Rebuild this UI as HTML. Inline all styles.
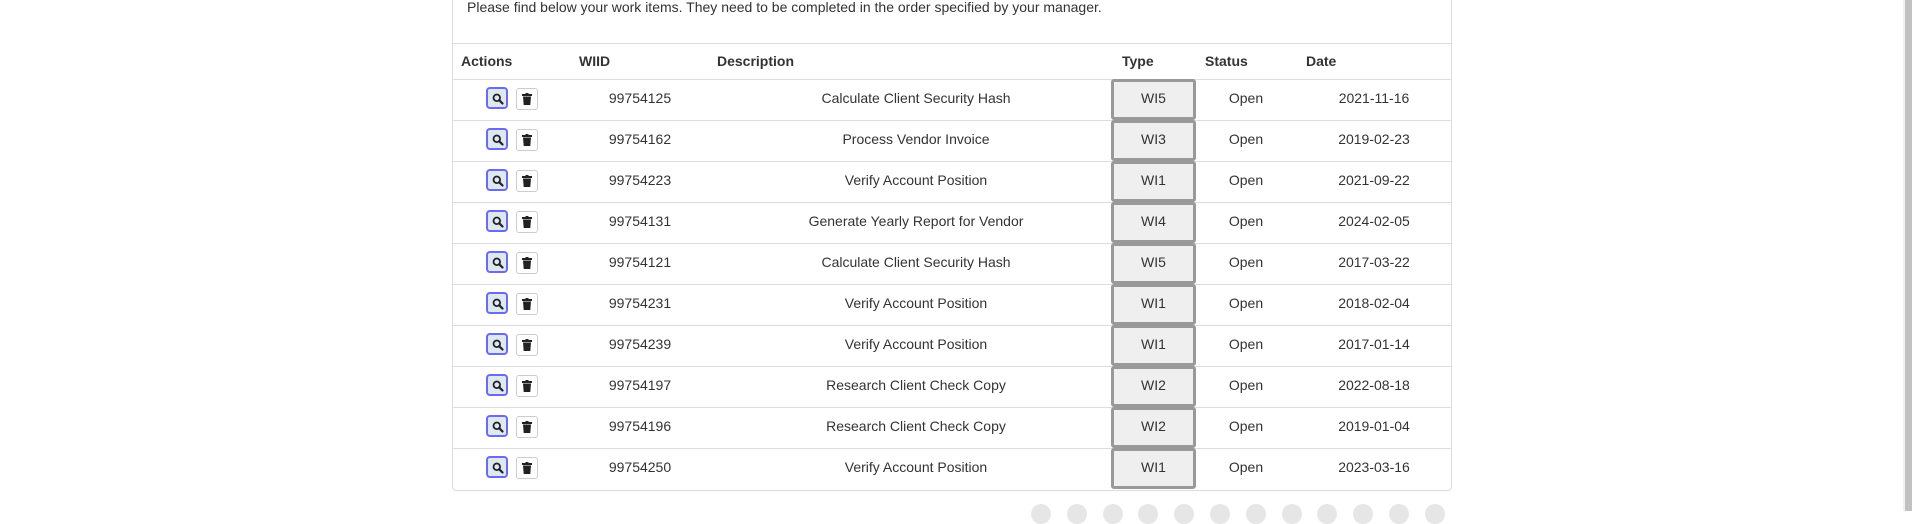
<!DOCTYPE html>
<html><head><meta charset="utf-8"><style>
html,body{margin:0;padding:0;background:#fff;width:1912px;height:511px;overflow:hidden;font-family:"Liberation Sans",Arial,sans-serif;color:#333;font-size:14px;}
.panel{position:absolute;left:452px;top:-6px;width:998px;height:495px;border:1px solid #ddd;border-radius:4px;}
.intro{position:absolute;left:467px;top:0;font-size:14px;line-height:14px;}
.hl{position:absolute;left:453px;width:998px;height:1px;background:#ddd;}
.th{position:absolute;top:53px;font-weight:bold;font-size:14px;}
.c{position:absolute;text-align:center;font-size:14px;}
.sb{position:absolute;width:22px;height:22px;box-sizing:border-box;border:2px solid #6b6bf0;border-radius:4px;background:#dde8f3;}
.tb{position:absolute;width:22px;height:22px;box-sizing:border-box;border:1px solid #ccc;border-radius:3px;background:#fff;}
.type{position:absolute;left:1111px;width:85px;height:41px;box-sizing:border-box;border:3px solid #999;border-radius:3px;background:#efefef;text-align:center;line-height:33px;}
.dot{position:absolute;top:504px;width:20px;height:20px;border-radius:50%;background:#e6e6e6;}
.scroll{position:absolute;left:1905px;top:0;width:7px;height:511px;background:#c1c1c1;}
.scrollt{position:absolute;left:1903px;top:0;width:2px;height:511px;background:#f0f0f0;}
</style></head><body>
<div class="panel"></div>
<div class="intro">Please find below your work items. They need to be completed in the order specified by your manager.</div>
<div class="hl" style="top:43px"></div>
<div class="th" style="left:461px">Actions</div>
<div class="th" style="left:579px">WIID</div>
<div class="th" style="left:717px">Description</div>
<div class="th" style="left:1122px">Type</div>
<div class="th" style="left:1205px">Status</div>
<div class="th" style="left:1306px">Date</div>
<div id="rows"></div>
<script>
var d=[["99754125","Calculate Client Security Hash","WI5","2021-11-16"],["99754162","Process Vendor Invoice","WI3","2019-02-23"],["99754223","Verify Account Position","WI1","2021-09-22"],["99754131","Generate Yearly Report for Vendor","WI4","2024-02-05"],["99754121","Calculate Client Security Hash","WI5","2017-03-22"],["99754231","Verify Account Position","WI1","2018-02-04"],["99754239","Verify Account Position","WI1","2017-01-14"],["99754197","Research Client Check Copy","WI2","2022-08-18"],["99754196","Research Client Check Copy","WI2","2019-01-04"],["99754250","Verify Account Position","WI1","2023-03-16"]];
var h="";
var mag='<svg width="12" height="12" viewBox="0 0 12 12" style="position:absolute;left:4px;top:4px"><circle cx="4.8" cy="4.8" r="3.3" fill="none" stroke="#222" stroke-width="1.8"/><line x1="7.2" y1="7.2" x2="10.5" y2="10.5" stroke="#222" stroke-width="2.2" stroke-linecap="round"/></svg>';
var trash='<svg width="10" height="12" viewBox="0 0 10 12" style="position:absolute;left:5px;top:4px"><rect x="0" y="1" width="10" height="2" fill="#222"/><rect x="3.5" y="0" width="3" height="1.5" fill="#222"/><path d="M1 3.5H9L8.3 12H1.7Z" fill="#222"/></svg>';
for(var i=0;i<d.length;i++){var t=79+i*41;
h+='<div class="hl" style="top:'+t+'px"></div>';
h+='<div class="sb" style="left:486px;top:'+(t+8)+'px">'+mag+'</div>';
h+='<div class="tb" style="left:516px;top:'+(t+9)+'px">'+trash+'</div>';
h+='<div class="c" style="left:580px;width:120px;top:'+(t+11)+'px">'+d[i][0]+'</div>';
h+='<div class="c" style="left:716px;width:400px;top:'+(t+11)+'px">'+d[i][1]+'</div>';
h+='<div class="type" style="top:'+t+'px">'+d[i][2]+'</div>';
h+='<div class="c" style="left:1206px;width:80px;top:'+(t+11)+'px">Open</div>';
h+='<div class="c" style="left:1314px;width:120px;top:'+(t+11)+'px">'+d[i][3]+'</div>';}
for(var k=0;k<12;k++){h+='<div class="dot" style="left:'+(1031+k*35.8)+'px"></div>';}
document.getElementById("rows").innerHTML=h;
</script>
<div class="scrollt"></div>
<div class="scroll"></div>
</body></html>
